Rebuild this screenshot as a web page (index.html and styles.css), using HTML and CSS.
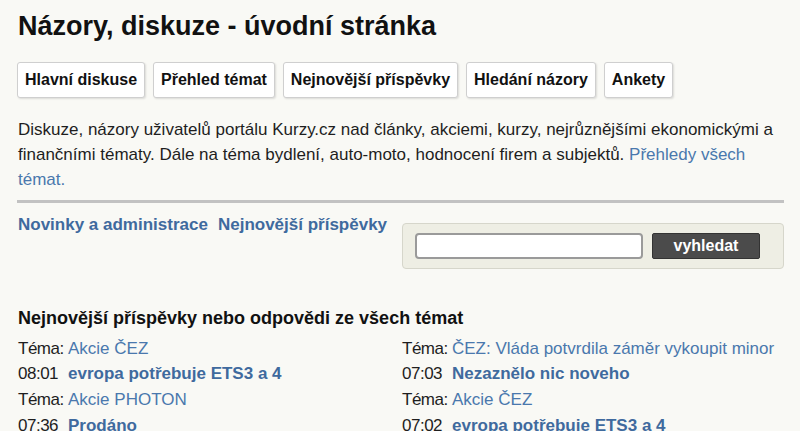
FILE: index.html
```html
<!DOCTYPE html>
<html lang="cs">
<head>
<meta charset="utf-8">
<title>Názory, diskuze - úvodní stránka</title>
<link rel="stylesheet" href="styles.css">
</head>
<body>
<div class="page">
  <h1 class="title">Názory, diskuze - úvodní stránka</h1>
  <nav class="tabs">
    <a class="tab" href="#">Hlavní diskuse</a>
    <a class="tab" href="#">Přehled témat</a>
    <a class="tab" href="#">Nejnovější příspěvky</a>
    <a class="tab" href="#">Hledání názory</a>
    <a class="tab" href="#">Ankety</a>
  </nav>
  <p class="intro">Diskuze, názory uživatelů portálu Kurzy.cz nad články, akciemi, kurzy, nejrůznějšími ekonomickými a finančními tématy. Dále na téma bydlení, auto-moto, hodnocení firem a subjektů. <a class="link" href="#">Přehledy všech témat.</a></p>
  <div class="rule"></div>
  <div class="toolbar">
    <div class="quick">
      <a class="strong-link" href="#">Novinky a administrace</a>
      <a class="strong-link" href="#">Nejnovější příspěvky</a>
    </div>
    <form class="search">
      <input class="search-input" type="text">
      <button class="search-btn" type="button">vyhledat</button>
    </form>
  </div>
  <h2 class="section">Nejnovější příspěvky nebo odpovědi ze všech témat</h2>
  <div class="cols">
    <div class="col">
      <span class="lbl">Téma:</span><a class="link" href="#">Akcie ČEZ</a>
      <span class="lbl">08:01</span><a class="strong-link" href="#">evropa potřebuje ETS3 a 4</a>
      <span class="lbl">Téma:</span><a class="link" href="#">Akcie PHOTON</a>
      <span class="lbl">07:36</span><a class="strong-link" href="#">Prodáno</a>
    </div>
    <div class="col">
      <span class="lbl">Téma:</span><a class="link" href="#">ČEZ: Vláda potvrdila záměr vykoupit minor</a>
      <span class="lbl">07:03</span><a class="strong-link" href="#">Nezaznělo nic noveho</a>
      <span class="lbl">Téma:</span><a class="link" href="#">Akcie ČEZ</a>
      <span class="lbl">07:02</span><a class="strong-link" href="#">evropa potřebuje ETS3 a 4</a>
    </div>
  </div>
</div>
</body>
</html>
```

FILE: styles.css
```css
html, body {
  margin: 0;
  padding: 0;
  background: #f9f9f5;
  color: #1e1e1e;
  font-family: "Liberation Sans", Arial, sans-serif;
}
.page {
  padding: 0 16px 0 17px;
  overflow: hidden;
  height: 431px;
}
.title {
  margin: 10px 0 0 1px;
  font-size: 27px;
  line-height: 32px;
  font-weight: bold;
  color: #111;
}
.tabs {
  display: flex;
  gap: 8px;
  margin-top: 20px;
}
.tab {
  display: block;
  padding: 8px 7px;
  line-height: 18px;
  font-size: 16px;
  font-weight: bold;
  color: #111;
  text-decoration: none;
  background: #fff;
  border: 1px solid #cfcfcf;
  border-radius: 3px;
  box-shadow: 1px 1px 2px rgba(0,0,0,0.12);
}
.intro {
  margin: 19px 0 0 1px;
  font-size: 17px;
  line-height: 25px;
  color: #1e1e1e;
}
.link {
  color: #4a78ad;
  text-decoration: none;
}
.strong-link {
  color: #3f6a9e;
  font-weight: bold;
  text-decoration: none;
}
.rule {
  margin-top: 8px;
  height: 3px;
  background: #c2c2c2;
}
.toolbar {
  display: flex;
  justify-content: space-between;
  align-items: flex-start;
  margin-top: 12px;
}
.quick {
  display: flex;
  gap: 10px;
  padding-left: 1px;
  font-size: 17px;
  line-height: 20px;
}
.search {
  display: flex;
  gap: 9px;
  margin: 8px 0 0 0;
  width: 382px;
  box-sizing: border-box;
  padding: 9px 12px;
  background: #eeeee4;
  border: 1px solid #d6d6cb;
  border-radius: 4px;
}
.search-input {
  width: 228px;
  height: 26px;
  box-sizing: border-box;
  margin: 0;
  border: 2px solid #9a9a9a;
  border-radius: 4px;
  background: #fff;
}
.search-btn {
  width: 108px;
  height: 26px;
  margin: 0;
  padding: 0;
  border: 1px solid #333;
  border-radius: 2px;
  background: #4b4b4b;
  color: #fff;
  font-family: "Liberation Sans", Arial, sans-serif;
  font-size: 16px;
  font-weight: bold;
}
.section {
  margin: 38px 0 0 1px;
  font-size: 18px;
  line-height: 22px;
  font-weight: bold;
  color: #111;
}
.cols {
  display: grid;
  grid-template-columns: 384px 1fr;
  margin-top: 7px;
}
.col {
  display: grid;
  grid-template-columns: 50px 1fr;
  grid-auto-rows: 25.6px;
  align-items: center;
  font-size: 17px;
  padding-left: 1px;
  white-space: nowrap;
  overflow: hidden;
}
.lbl {
  color: #1e1e1e;
  letter-spacing: -0.5px;
}
```
